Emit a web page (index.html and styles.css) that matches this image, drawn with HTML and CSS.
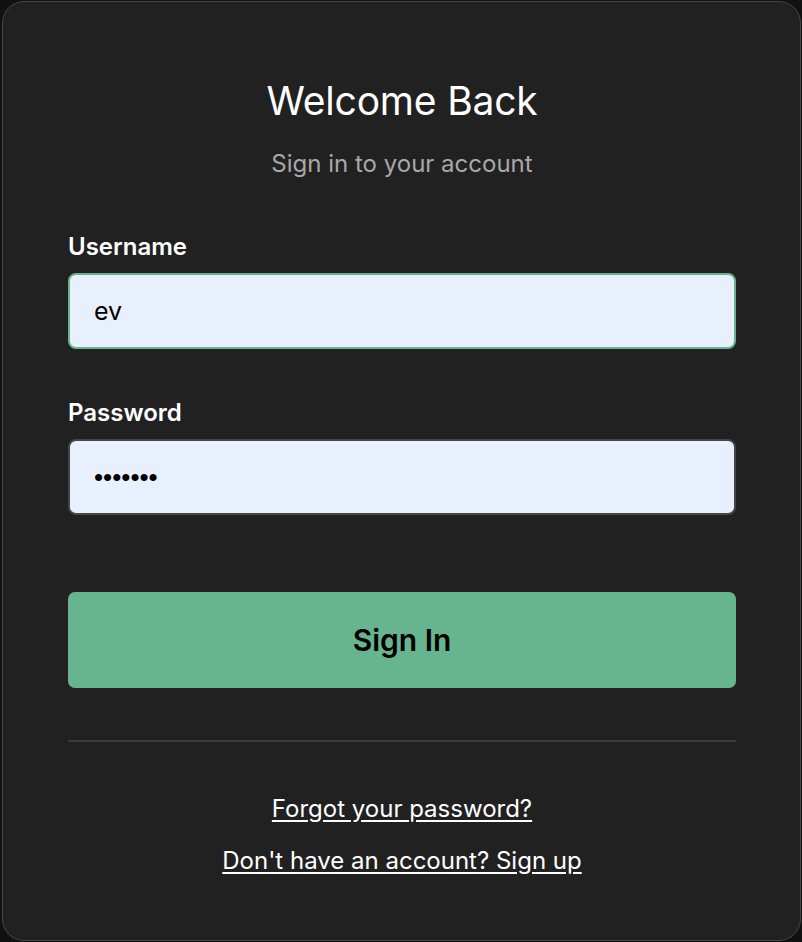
FILE: index.html
```html
<!DOCTYPE html>
<html lang="en">
<head>
<meta charset="utf-8">
<title>Sign in</title>
<link rel="stylesheet" href="styles.css">
</head>
<body>
<main class="card">
  <h1 class="title">Welcome Back</h1>
  <p class="subtitle">Sign in to your account</p>
  <form class="form">
    <div class="field">
      <label class="label" for="u">Username</label>
      <input class="input input-focus" id="u" type="text" value="ev">
    </div>
    <div class="field">
      <label class="label" for="p">Password</label>
      <input class="input input-password" id="p" type="password" value="1234567">
    </div>
    <button class="btn" type="button">Sign In</button>
  </form>
  <hr class="divider">
  <div class="links">
    <a class="link" href="#">Forgot your password?</a>
    <a class="link" href="#">Don't have an account? Sign up</a>
  </div>
</main>
</body>
</html>
```
FILE: styles.css
```css
* { box-sizing: border-box; }
html, body { margin: 0; padding: 0; }
body {
  background: #111111;
  width: 802px;
  height: 942px;
  padding: 1px 1px 1px 2px;
  font-family: Inter, "Noto Sans", sans-serif;
}
.card {
  width: 799px;
  height: 940px;
  background: #212121;
  border: 1px solid #454545;
  border-radius: 22px;
  padding: 75px 64px 0 65px;
  display: flex;
  flex-direction: column;
  color: #ffffff;
}
.title {
  margin: 0;
  text-align: center;
  font-size: 39px;
  font-weight: 400;
  line-height: 48px;
  letter-spacing: -0.2px;
}
.subtitle {
  margin: 24px 0 0;
  text-align: center;
  font-size: 24px;
  line-height: 30px;
  color: #a8a8a8;
}
.form {
  margin-top: 53px;
  display: flex;
  flex-direction: column;
}
.field {
  display: flex;
  flex-direction: column;
  margin-bottom: 49px;
}
.label {
  font-size: 24px;
  font-weight: 600;
  line-height: 30px;
  margin-bottom: 11px;
}
.input {
  height: 76px;
  border: 2px solid #454545;
  border-radius: 8px;
  background: #e8f0fe;
  padding: 0 24px;
  font-family: Inter, "Noto Sans", sans-serif;
  font-size: 25px;
  color: #000;
  outline: none;
}
.input-password {
  font-family: "Liberation Sans", Arial, sans-serif;
  font-size: 26px;
}
.input-focus { border-color: #66b58f; }
.btn {
  margin-top: 28px;
  height: 96px;
  border: none;
  border-radius: 7px;
  background: #66b58f;
  color: #000;
  font-family: Inter, "Noto Sans", sans-serif;
  font-size: 30px;
  font-weight: 600;
}
.divider {
  margin: 52px 0 0;
  border: none;
  border-top: 2px solid #3a3a3a;
}
.links {
  margin-top: 52px;
  display: flex;
  flex-direction: column;
  align-items: center;
  gap: 22px;
}
.link {
  color: #ffffff;
  font-size: 24px;
  line-height: 30px;
  text-decoration: underline;
  text-underline-offset: 3px;
}
```
